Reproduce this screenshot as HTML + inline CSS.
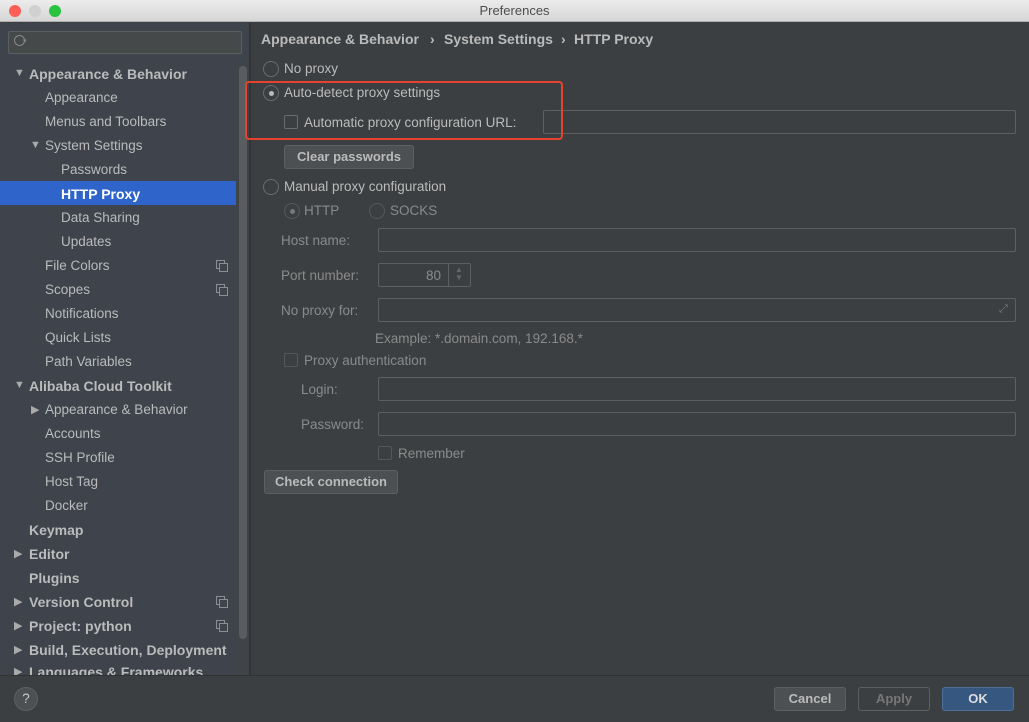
<!DOCTYPE html>
<html><head><style>
*{margin:0;padding:0;box-sizing:border-box}
body{width:1029px;height:722px;background:#3c3f41;font-family:"Liberation Sans",sans-serif;font-size:13.5px;color:#bbbbbb;position:relative;overflow:hidden}
.a{position:absolute;white-space:nowrap}
.title{left:0;top:0;width:1029px;height:22px;background:linear-gradient(#ececec,#d6d6d6);border-bottom:1px solid #b0b0b0;text-align:center;color:#4d4d4d;line-height:22px;font-size:13px}
.dot{position:absolute;top:5px;width:12px;height:12px;border-radius:50%}
.side{left:0;top:23px;width:249px;height:652px;background:#3e434c}
.it{position:absolute;height:24px;line-height:26px;color:#bbbbbb}
.b{font-weight:bold;font-size:14px}
.tri{position:absolute;font-size:11px;color:#aaa}
.cp{position:absolute;left:216px;width:11px;height:11px}
.cp:before,.cp:after{content:"";position:absolute;border:1px solid #8a8f96;width:7px;height:7px;background:#3e434c}
.cp:before{left:0;top:0}.cp:after{left:3px;top:3px}
.rb{position:absolute;width:16px;height:16px;border-radius:50%;border:1px solid #6a6d70;background:#3c3f41}
.cb{position:absolute;width:14px;height:14px;border-radius:2px;border:1px solid #6a6d70}
.in{position:absolute;height:24px;border:1px solid #5e6060;border-radius:2px;background:#3c3f41}
.btn{position:absolute;height:24px;border:1px solid #5e6060;border-radius:3px;background:#4c5052;color:#bbb;text-align:center;line-height:22px;font-weight:bold;font-size:13px}
.dim{color:#8a8a8a}
</style></head><body>
<div class="a title">Preferences
<div class="dot" style="left:9px;background:#fd5f57"></div>
<div class="dot" style="left:29px;background:#d0d0d0"></div>
<div class="dot" style="left:49px;background:#29c33f"></div></div>
<div class="a side"></div>
<div class="a" style="left:8px;top:31px;width:234px;height:23px;border:1px solid #5b5e61;border-radius:2px;background:#45494a"></div>
<div class="a" style="left:14px;top:35px;width:11px;height:11px;border:1.5px solid #888;border-radius:50%"></div>
<div class="a" style="left:23px;top:37px;font-size:7px;color:#888">▾</div>
<div class="a" style="left:0;top:181px;width:236px;height:24px;background:#2f65ca"></div>
<div class="a" style="left:238px;top:64px;width:10px;height:611px;background:#414447"></div>
<div class="a" style="left:239px;top:66px;width:8px;height:573px;background:#5a5d5f;border-radius:4px"></div>
<div class="a" style="left:249px;top:23px;width:2px;height:652px;background:#313335"></div>

<div class="tri" style="left:14px;top:67px">▼</div><div class="it b" style="left:29px;top:61px">Appearance &amp; Behavior</div>
<div class="it" style="left:45px;top:85px">Appearance</div>
<div class="it" style="left:45px;top:109px">Menus and Toolbars</div>
<div class="tri" style="left:30px;top:139px">▼</div><div class="it" style="left:45px;top:133px">System Settings</div>
<div class="it" style="left:61px;top:157px">Passwords</div>
<div class="it b" style="left:61px;top:181px;color:#fff">HTTP Proxy</div>
<div class="it" style="left:61px;top:205px">Data Sharing</div>
<div class="it" style="left:61px;top:229px">Updates</div>
<div class="it" style="left:45px;top:253px">File Colors</div><div class="cp" style="top:260px"></div>
<div class="it" style="left:45px;top:277px">Scopes</div><div class="cp" style="top:284px"></div>
<div class="it" style="left:45px;top:301px">Notifications</div>
<div class="it" style="left:45px;top:325px">Quick Lists</div>
<div class="it" style="left:45px;top:349px">Path Variables</div>
<div class="tri" style="left:14px;top:379px">▼</div><div class="it b" style="left:29px;top:373px">Alibaba Cloud Toolkit</div>
<div class="tri" style="left:31px;top:403px">▶</div><div class="it" style="left:45px;top:397px">Appearance &amp; Behavior</div>
<div class="it" style="left:45px;top:421px">Accounts</div>
<div class="it" style="left:45px;top:445px">SSH Profile</div>
<div class="it" style="left:45px;top:469px">Host Tag</div>
<div class="it" style="left:45px;top:493px">Docker</div>
<div class="it b" style="left:29px;top:517px">Keymap</div>
<div class="tri" style="left:14px;top:547px">▶</div><div class="it b" style="left:29px;top:541px">Editor</div>
<div class="it b" style="left:29px;top:565px">Plugins</div>
<div class="tri" style="left:14px;top:595px">▶</div><div class="it b" style="left:29px;top:589px">Version Control</div><div class="cp" style="top:596px"></div>
<div class="tri" style="left:14px;top:619px">▶</div><div class="it b" style="left:29px;top:613px">Project: python</div><div class="cp" style="top:620px"></div>
<div class="tri" style="left:14px;top:643px">▶</div><div class="it b" style="left:29px;top:637px">Build, Execution, Deployment</div>
<div class="a" style="left:0;top:661px;width:236px;height:14px;overflow:hidden"><div class="tri" style="left:14px;top:4px">▶</div><div class="it b" style="left:29px;top:-2px">Languages &amp; Frameworks</div></div>

<div class="a b" style="left:261px;top:31px">Appearance &amp; Behavior</div>
<div class="a b" style="left:430px;top:31px">›</div><div class="a b" style="left:444px;top:31px">System Settings</div>
<div class="a b" style="left:561px;top:31px">›</div><div class="a b" style="left:574px;top:31px">HTTP Proxy</div>

<div class="rb" style="left:263px;top:61px"></div><div class="a" style="left:284px;top:61px">No proxy</div>
<div class="rb" style="left:263px;top:85px"></div><div class="a" style="left:269px;top:91px;width:5px;height:5px;border-radius:50%;background:#bbb"></div><div class="a" style="left:284px;top:85px">Auto-detect proxy settings</div>
<div class="cb" style="left:284px;top:115px"></div><div class="a" style="left:304px;top:115px">Automatic proxy configuration URL:</div>
<div class="in" style="left:543px;top:110px;width:473px"></div>
<div class="a" style="left:245px;top:81px;width:318px;height:59px;border:2px solid #e5432b;border-radius:4px"></div>
<div class="btn" style="left:284px;top:145px;width:130px">Clear passwords</div>
<div class="rb" style="left:263px;top:179px"></div><div class="a" style="left:284px;top:179px">Manual proxy configuration</div>
<div class="rb" style="left:284px;top:203px;border-color:#55585a"></div><div class="a" style="left:290px;top:209px;width:5px;height:5px;border-radius:50%;background:#777"></div><div class="a dim" style="left:304px;top:203px">HTTP</div>
<div class="rb" style="left:369px;top:203px;border-color:#55585a"></div><div class="a dim" style="left:390px;top:203px">SOCKS</div>
<div class="a dim" style="left:281px;top:233px">Host name:</div><div class="in" style="left:378px;top:228px;width:638px"></div>
<div class="a dim" style="left:281px;top:268px">Port number:</div><div class="in" style="left:378px;top:263px;width:93px"></div>
<div class="a dim" style="left:426px;top:268px">80</div><div class="a" style="left:448px;top:264px;width:1px;height:22px;background:#5e6060"></div><div class="a" style="left:455px;top:266px;font-size:8px;color:#666;line-height:8px">▲<br>▼</div>
<div class="a dim" style="left:281px;top:303px">No proxy for:</div><div class="in" style="left:378px;top:298px;width:638px"></div>
<div class="a" style="left:999px;top:303px;color:#777;font-size:11px">⤢</div>
<div class="a dim" style="left:375px;top:331px">Example: *.domain.com, 192.168.*</div>
<div class="cb" style="left:284px;top:353px;border-color:#55585a"></div><div class="a dim" style="left:304px;top:353px">Proxy authentication</div>
<div class="a dim" style="left:301px;top:382px">Login:</div><div class="in" style="left:378px;top:377px;width:638px"></div>
<div class="a dim" style="left:301px;top:417px">Password:</div><div class="in" style="left:378px;top:412px;width:638px"></div>
<div class="cb" style="left:378px;top:446px;border-color:#55585a"></div><div class="a dim" style="left:398px;top:446px">Remember</div>
<div class="btn" style="left:264px;top:470px;width:134px">Check connection</div>

<div class="a" style="left:0;top:675px;width:1029px;height:47px;background:#3c3f41;border-top:1px solid #323232"></div>
<div class="a" style="left:14px;top:687px;width:24px;height:24px;border-radius:50%;background:#4c5052;border:1px solid #5e6060;text-align:center;line-height:22px;color:#ccc">?</div>
<div class="btn" style="left:774px;top:687px;width:72px">Cancel</div>
<div class="btn" style="left:858px;top:687px;width:72px;background:#3c3f41;color:#777">Apply</div>
<div class="btn" style="left:942px;top:687px;width:72px;background:#365880;border-color:#4c7099;color:#ddd">OK</div>
</body></html>
